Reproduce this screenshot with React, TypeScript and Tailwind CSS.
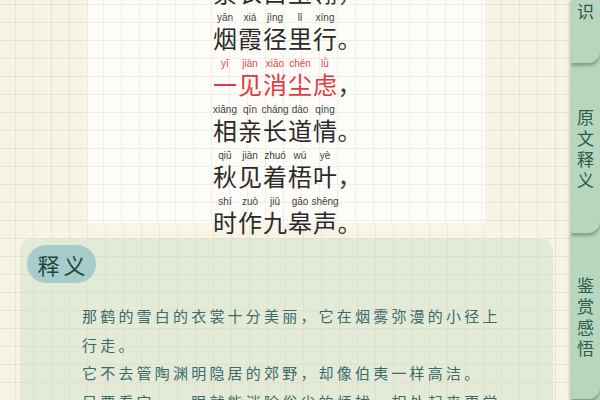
import React from "react";

type Row = { chars: string[]; py: string[]; p: string; red?: boolean };

const rows: Row[] = [
  { chars: ["素", "衣", "白", "玉", "翎"], py: ["sù", "yī", "bái", "yù", "líng"], p: "，" },
  { chars: ["烟", "霞", "径", "里", "行"], py: ["yān", "xiá", "jìng", "lǐ", "xíng"], p: "。" },
  { chars: ["一", "见", "消", "尘", "虑"], py: ["yī", "jiàn", "xiāo", "chén", "lǜ"], p: "，", red: true },
  { chars: ["相", "亲", "长", "道", "情"], py: ["xiāng", "qīn", "cháng", "dào", "qíng"], p: "。" },
  { chars: ["秋", "见", "着", "梧", "叶"], py: ["qiū", "jiàn", "zhuó", "wú", "yè"], p: "，" },
  { chars: ["时", "作", "九", "皋", "声"], py: ["shí", "zuò", "jiǔ", "gāo", "shēng"], p: "。" },
];

function PoemRow({ row }: { row: Row }) {
  return (
    <div className="flex justify-center pl-[2px] mb-[6px]">
      {row.chars.map((c, i) => (
        <div key={i} className="flex w-[25px] flex-col items-center">
          <span
            className={`h-[12px] text-[10px] leading-[12px] font-['Liberation_Sans',sans-serif] ${
              row.red ? "text-[#e0474c]" : "text-[#3f3f3f]"
            }`}
          >
            {row.py[i]}
          </span>
          <span
            className={`h-[28px] text-[24px] leading-[28px] font-['Noto_Sans_CJK_SC',sans-serif] ${
              row.red ? "text-[#e03a40]" : "text-[#2a2a2a]"
            }`}
          >
            {c}
          </span>
        </div>
      ))}
      <div className="flex w-[25px] flex-col">
        <span className="h-[12px]" />
        <span className="h-[28px] text-[24px] leading-[28px] text-[#3a3a3a] font-['Noto_Sans_CJK_SC',sans-serif]">
          {row.p}
        </span>
      </div>
    </div>
  );
}

function Tab({
  text,
  className,
  z,
}: {
  text: string;
  className: string;
  z: string;
}) {
  return (
    <div
      className={`relative ${z} flex w-full flex-col items-center overflow-hidden rounded-br-[12px] bg-[#b7d6bd] shadow-[0_3px_3px_rgba(40,70,50,0.35)] ${className}`}
    >
      {text.split("").map((c, i) => (
        <span
          key={i}
          className="text-[17px] leading-[21px] text-[#2b5a4e] font-['Noto_Sans_CJK_SC',sans-serif]"
        >
          {c}
        </span>
      ))}
    </div>
  );
}

export default function App() {
  return (
    <div className="relative flex h-[400px] w-[600px] overflow-hidden bg-[#f8f4e4] bg-[linear-gradient(to_right,#ebe3cb_1px,transparent_1px),linear-gradient(to_bottom,#ebe3cb_1px,transparent_1px)] bg-size-[18px_18px] bg-position-[15px_4px]">
      <div className="flex flex-1 flex-col">
        <div className="ml-[88px] h-[223px] w-[397px] shrink-0 bg-[#fdfcf8] bg-[linear-gradient(to_right,#f2eee5_1px,transparent_1px),linear-gradient(to_bottom,#f2eee5_1px,transparent_1px)] bg-size-[18px_18px] bg-position-[15px_4px] shadow-[0_4px_8px_rgba(250,246,235,0.9)]">
          <div className="-mt-[34px] flex flex-col">
            {rows.map((r, i) => (
              <PoemRow key={i} row={r} />
            ))}
          </div>
        </div>
        <div className="ml-[20px] mt-[15px] w-[533px] flex-1 rounded-t-[14px] bg-[#d3e2cd]/55 pl-[7px] pt-[7px]">
          <div className="flex h-[38px] w-[69px] items-center justify-center rounded-full bg-[#a7cdca] text-[22px] tracking-[4px] pl-[4px] text-[#24463f] font-['Noto_Sans_CJK_SC',sans-serif]">
            释义
          </div>
          <div className="ml-[55px] mt-[19px] w-[428px] text-[15px] leading-[28.5px] tracking-[3.2px] text-[#3d6a69] font-['Noto_Sans_CJK_SC',sans-serif]">
            <p>那鹤的雪白的衣裳十分美丽，它在烟雾弥漫的小径上行走。</p>
            <p>它不去管陶渊明隐居的郊野，却像伯夷一样高洁。</p>
            <p>只要看它，一眼就能消除俗尘的烦扰，相处起来更觉得情谊深长。</p>
          </div>
        </div>
      </div>
      <div className="flex h-full w-[29px] shrink-0 flex-col bg-[#b7d6bd] shadow-[-2px_0_3px_rgba(60,90,60,0.15)]">
        <Tab text="背景知识" z="z-30" className="h-[63px] justify-end pb-[42px]" />
        <Tab text="原文释义" z="z-20" className="h-[170px] justify-center" />
        <Tab text="鉴赏感悟" z="z-10" className="h-[166px] justify-center" />
      </div>
    </div>
  );
}
